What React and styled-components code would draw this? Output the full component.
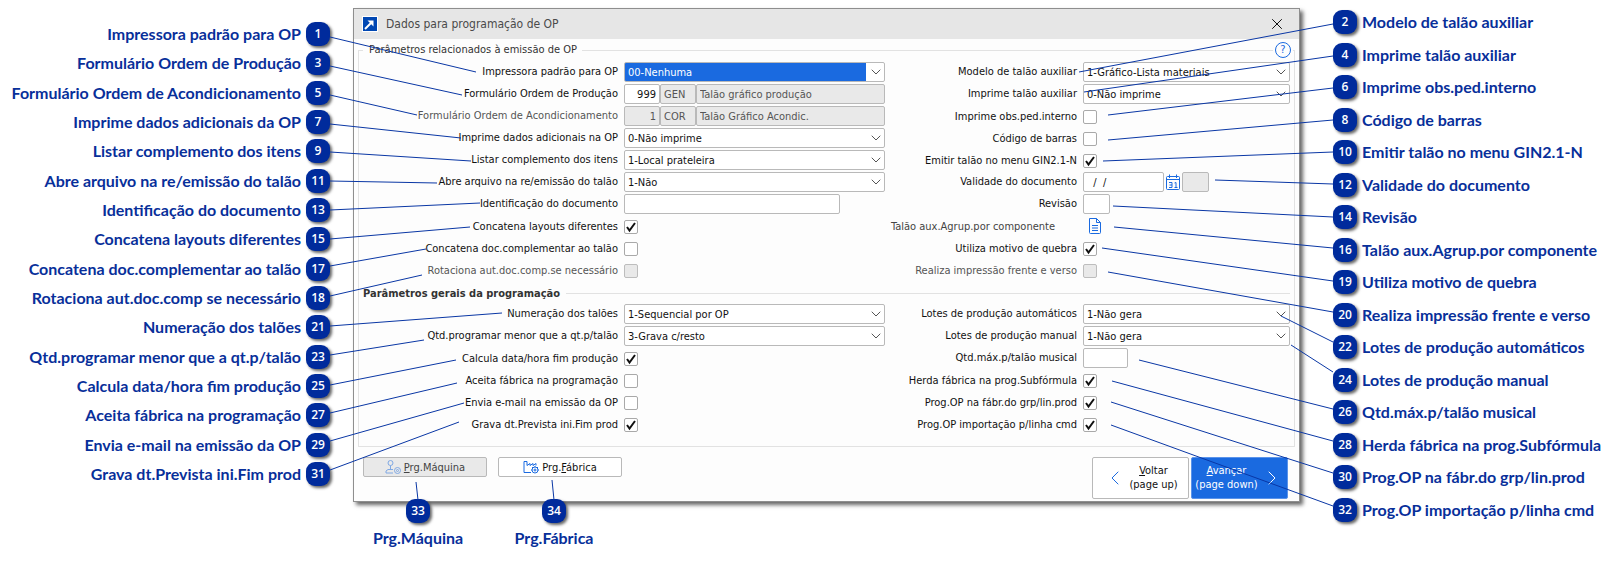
import { useId } from "react";
import styled, { createGlobalStyle } from "styled-components";
import { ChevronDown, ChevronLeft, ChevronRight, X } from "lucide-react";

const leftCallouts = [
    [1, "Impressora padrão para OP"],
    [3, "Formulário Ordem de Produção"],
    [5, "Formulário Ordem de Acondicionamento"],
    [7, "Imprime dados adicionais da OP"],
    [9, "Listar complemento dos itens"],
    [11, "Abre arquivo na re/emissão do talão"],
    [13, "Identificação do documento"],
    [15, "Concatena layouts diferentes"],
    [17, "Concatena doc.complementar ao talão"],
    [18, "Rotaciona aut.doc.comp se necessário"],
    [21, "Numeração dos talões"],
    [23, "Qtd.programar menor que a qt.p/talão"],
    [25, "Calcula data/hora fim produção"],
    [27, "Aceita fábrica na programação"],
    [29, "Envia e-mail na emissão da OP"],
    [31, "Grava dt.Prevista ini.Fim prod"],
]

const rightCallouts = [
    [2, "Modelo de talão auxiliar"],
    [4, "Imprime talão auxiliar"],
    [6, "Imprime obs.ped.interno"],
    [8, "Código de barras"],
    [10, "Emitir talão no menu GIN2.1-N"],
    [12, "Validade do documento"],
    [14, "Revisão"],
    [16, "Talão aux.Agrup.por componente"],
    [19, "Utiliza motivo de quebra"],
    [20, "Realiza impressão frente e verso"],
    [22, "Lotes de produção automáticos"],
    [24, "Lotes de produção manual"],
    [26, "Qtd.máx.p/talão musical"],
    [28, "Herda fábrica na prog.Subfórmula"],
    [30, "Prog.OP na fábr.do grp/lin.prod"],
    [32, "Prog.OP importação p/linha cmd"],
]

const bottomCallouts = [
    [33, "Prg.Máquina"],
    [34, "Prg.Fábrica"],
]

// leader lines, x1 y1 x2 y2: the first set hangs on the left edge, the second on the right edge
const leftLeaders = [
    [330, 37, 476, 72],
    [330, 66, 462, 95],
    [330, 95, 417, 115],
    [330, 124, 461, 138],
    [330, 152, 471, 161],
    [330, 181, 437, 183],
    [330, 210, 480, 203],
    [330, 239, 470, 227],
    [330, 266, 426, 249],
    [330, 296, 422, 275],
    [330, 326, 502, 313],
    [330, 355, 424, 340],
    [330, 385, 456, 360],
    [330, 413, 457, 383],
    [330, 441, 464, 403],
    [330, 470, 459, 422],
    [418, 500, 416, 482],
    [554, 500, 552, 480],
]

const rightLeaders = [
    [278, 24, 24, 72],
    [278, 56, 29, 92],
    [278, 88, 53, 115],
    [278, 120, 53, 140],
    [278, 152, 48, 161],
    [278, 184, 160, 180],
    [278, 217, 58, 206],
    [278, 248, 59, 227],
    [278, 281, 47, 248],
    [278, 312, 53, 272],
    [278, 342, 226, 316],
    [278, 372, 236, 345],
    [278, 409, 84, 360],
    [278, 441, 57, 381],
    [278, 473, 56, 402],
    [278, 506, 56, 425],
]

const Callout = ({number, text}) => (
    <CalloutItem>
        <Badge>{number}</Badge>
        <span>{text}</span>
    </CalloutItem>
)

const Leaders = ({lines, width, side}) => (
    <LeaderSvg $side={side} width={width} height="565" aria-hidden="true">
        {lines.map(([x1, y1, x2, y2]) => (
            <line key={`${x1}-${y1}`} x1={x1} y1={y1} x2={x2} y2={y2} />
        ))}
    </LeaderSvg>
)

const SelectField = ({label, value, selected}) => {
    const id = useId();
    return (
        <>
            <FieldLabel htmlFor={id}>{label}</FieldLabel>
            <SelectWrap>
                <Select id={id} $selected={selected} defaultValue={value}>
                    <option>{value}</option>
                </Select>
                <ChevronDown size={16} strokeWidth={1} absoluteStrokeWidth />
            </SelectWrap>
        </>
    )
}

const CheckField = ({label, checked, disabled}) => {
    const id = useId();
    return (
        <>
            <FieldLabel htmlFor={id} $dim={disabled} $check>{label}</FieldLabel>
            <CheckCell>
                <CheckBox id={id} type="checkbox" defaultChecked={checked} disabled={disabled} />
            </CheckCell>
        </>
    )
}

const TextField = ({label, width}) => {
    const id = useId();
    return (
        <>
            <FieldLabel htmlFor={id}>{label}</FieldLabel>
            <ControlCell>
                <TextInput id={id} type="text" $width={width} />
            </ControlCell>
        </>
    )
}

const FormField = ({label, number, code, name, disabled}) => {
    const id = useId();
    return (
        <>
            <FieldLabel htmlFor={id} $dim={disabled}>{label}</FieldLabel>
            <ControlCell>
                <TextInput id={id} type="text" defaultValue={number} disabled={disabled} $width="36px" $right />
                <TextInput type="text" aria-label={`${label} - código`} defaultValue={code} disabled $width="36px" />
                <TextInput type="text" aria-label={`${label} - descrição`} defaultValue={name} disabled $width="100%" />
            </ControlCell>
        </>
    )
}

const DateField = ({label}) => {
    const id = useId();
    return (
        <>
            <FieldLabel htmlFor={id}>{label}</FieldLabel>
            <ControlCell>
                <TextInput id={id} type="text" defaultValue="  /  /" $width="81px" $date />
                <IconButton type="button" aria-label="Abrir calendário">
                    <svg width="14" height="16" viewBox="0 0 14 16" fill="none" stroke="#1a6ae0">
                        <rect x="0.5" y="2.5" width="13" height="13" rx="1" />
                        <path d="M0.5 5.5h13M3.5 0.5v3.5M10.5 0.5v3.5" />
                        <path d="M3 8.5h3v5h-3M3.5 11h2.5M8.5 9l1.5-0.5v5M8.5 13.5h3" />
                    </svg>
                </IconButton>
                <TextInput type="text" aria-label="Dia da semana" disabled $width="27px" />
            </ControlCell>
        </>
    )
}

const App = () => {
    return (
        <>
            <GlobalStyle />
            <Page>
                <LeftCallouts>
                    {leftCallouts.map(([n, text]) => <Callout key={n} number={n} text={text} />)}
                </LeftCallouts>
                <Middle>
                    <Dialog role="dialog" aria-labelledby="dialogTitle">
                        <TitleBar>
                            <AppIcon width="16" height="16" viewBox="0 0 16 16">
                                <rect x="0.5" y="0.5" width="15" height="15" fill="#0047b3" stroke="#fff" />
                                <path d="M3 13L9.5 6.5" stroke="#fff" strokeWidth="2" />
                                <path d="M5.5 4.5H11.5V10.5Z" fill="#fff" />
                            </AppIcon>
                            <Title id="dialogTitle">Dados para programação de OP</Title>
                            <CloseButton type="button" aria-label="Fechar">
                                <X size={18} strokeWidth={1} absoluteStrokeWidth />
                            </CloseButton>
                        </TitleBar>
                        <Group>
                            <Legend>Parâmetros relacionados à emissão de OP</Legend>
                            <HelpButton type="button" aria-label="Ajuda">?</HelpButton>
                            <Columns>
                                <LeftFields>
                                    <SelectField label="Impressora padrão para OP" value="00-Nenhuma" selected />
                                    <FormField label="Formulário Ordem de Produção" number="999" code="GEN" name="Talão gráfico produção" />
                                    <FormField label="Formulário Ordem de Acondicionamento" number="1" code="COR" name="Talão Gráfico Acondic." disabled />
                                    <SelectField label="Imprime dados adicionais na OP" value="0-Não imprime" />
                                    <SelectField label="Listar complemento dos itens" value="1-Local prateleira" />
                                    <SelectField label="Abre arquivo na re/emissão do talão" value="1-Não" />
                                    <TextField label="Identificação do documento" width="216px" />
                                    <CheckField label="Concatena layouts diferentes" checked />
                                    <CheckField label="Concatena doc.complementar ao talão" />
                                    <CheckField label="Rotaciona aut.doc.comp.se necessário" disabled />
                                </LeftFields>
                                <RightFields>
                                    <SelectField label="Modelo de talão auxiliar" value="1-Gráfico-Lista materiais" />
                                    <SelectField label="Imprime talão auxiliar" value="0-Não imprime" />
                                    <CheckField label="Imprime obs.ped.interno" />
                                    <CheckField label="Código de barras" />
                                    <CheckField label="Emitir talão no menu GIN2.1-N" checked />
                                    <DateField label="Validade do documento" />
                                    <TextField label="Revisão" width="27px" />
                                    <ReportLabel>Talão aux.Agrup.por componente</ReportLabel>
                                    <ControlCell>
                                        <IconButton type="button" aria-label="Talão aux.Agrup.por componente">
                                            <svg width="14" height="16" viewBox="0 0 14 16" fill="none" stroke="#1a6ae0">
                                                <path d="M1.5 0.5h7l4 4v10a1 1 0 0 1-1 1h-9a1 1 0 0 1-1-1z" />
                                                <path d="M8.5 0.5v4h4M4 7.5h6M4 10h6M4 12.5h6" />
                                            </svg>
                                        </IconButton>
                                    </ControlCell>
                                    <CheckField label="Utiliza motivo de quebra" checked />
                                    <CheckField label="Realiza impressão frente e verso" disabled />
                                </RightFields>
                            </Columns>
                            <SectionTitle>Parâmetros gerais da programação</SectionTitle>
                            <Columns>
                                <LeftFields>
                                    <SelectField label="Numeração dos talões" value="1-Sequencial por OP" />
                                    <SelectField label="Qtd.programar menor que a qt.p/talão" value="3-Grava c/resto" />
                                    <CheckField label="Calcula data/hora fim produção" checked />
                                    <CheckField label="Aceita fábrica na programação" />
                                    <CheckField label="Envia e-mail na emissão da OP" />
                                    <CheckField label="Grava dt.Prevista ini.Fim prod" checked />
                                </LeftFields>
                                <RightFields>
                                    <SelectField label="Lotes de produção automáticos" value="1-Não gera" />
                                    <SelectField label="Lotes de produção manual" value="1-Não gera" />
                                    <TextField label="Qtd.máx.p/talão musical" width="45px" />
                                    <CheckField label="Herda fábrica na prog.Subfórmula" checked />
                                    <CheckField label="Prog.OP na fábr.do grp/lin.prod" checked />
                                    <CheckField label="Prog.OP importação p/linha cmd" checked />
                                </RightFields>
                            </Columns>
                        </Group>
                        <Footer>
                            <SmallButton type="button" disabled>
                                <svg width="16" height="14" viewBox="0 0 16 14" fill="none" stroke="currentColor">
                                    <circle cx="5.5" cy="3" r="2.5" />
                                    <path d="M5.5 5.5v4M8 9.5H3l-2 1.5v2h7" />
                                    <circle cx="12.5" cy="10.5" r="3" />
                                    <circle cx="12.5" cy="10.5" r="1" />
                                </svg>
                                <span><u>P</u>rg.Máquina</span>
                            </SmallButton>
                            <SmallButton type="button">
                                <svg width="16" height="14" viewBox="0 0 16 14" fill="none" stroke="currentColor">
                                    <path d="M8 12.5H1V1.5h3v4l3-2v2l3-2v2l3-2v2" />
                                    <circle cx="12" cy="10" r="3" />
                                    <circle cx="12" cy="10" r="1" />
                                    <path d="M8 10h1M12 6v1M15 10h1M9 7l1 1M15 7l-1 1" />
                                </svg>
                                <span>Prg.<u>F</u>ábrica</span>
                            </SmallButton>
                            <Spacer />
                            <PageButton type="button">
                                <ChevronLeft size={24} strokeWidth={1} absoluteStrokeWidth />
                                <span><u>V</u>oltar<br />(page up)</span>
                            </PageButton>
                            <PageButton type="button" $primary>
                                <span><u>A</u>vançar<br />(page down)</span>
                                <ChevronRight size={24} strokeWidth={1} absoluteStrokeWidth />
                            </PageButton>
                        </Footer>
                    </Dialog>
                    <BottomCallouts>
                        {bottomCallouts.map(([n, text]) => <Callout key={n} number={n} text={text} />)}
                    </BottomCallouts>
                </Middle>
                <RightCallouts>
                    {rightCallouts.map(([n, text]) => <Callout key={n} number={n} text={text} />)}
                </RightCallouts>
                <Leaders lines={leftLeaders} width={600} side="left" />
                <Leaders lines={rightLeaders} width={560} side="right" />
            </Page>
        </>
    )
}

const checkMark = `url("data:image/svg+xml,%3Csvg xmlns='http://www.w3.org/2000/svg' width='12' height='12' viewBox='0 0 12 12'%3E%3Cpath d='M2 6L4.5 9.5L10 2' fill='none' stroke='%23111' stroke-width='2'/%3E%3C/svg%3E")`

const GlobalStyle = createGlobalStyle`
    * {
        box-sizing: border-box;
    }
    body {
        margin: 0;
        background: #fff;
    }
    button, input, select {
        font: inherit;
        color: inherit;
        margin: 0;
    }
`

const Page = styled.div`
    position: relative;
    display: grid;
    grid-template-columns: 353px minmax(947px, 1fr) 315px;
    padding-top: 8px;
    font: 11px "DejaVu Sans Condensed", "DejaVu Sans", sans-serif;
    color: #111;
`

const CalloutItem = styled.li`
    display: flex;
    align-items: center;
    gap: 5px;
    line-height: 24px;
    white-space: nowrap;
`

const Badge = styled.span`
    width: 24px;
    height: 24px;
    border-radius: 9px;
    background: #002b9c;
    box-shadow: 2px 2px 3px rgba(0, 0, 0, 0.6);
    color: #fff;
    font: 600 12px/24px "Open Sans", sans-serif;
    text-align: center;
`

const CalloutList = styled.ul`
    display: flex;
    flex-direction: column;
    justify-content: space-between;
    margin: 0;
    list-style: none;
    font: bold 16px Lato, sans-serif;
    color: #082f9a;
`

const LeftCallouts = styled(CalloutList)`
    padding: 14px 23px 64px 0;

    ${CalloutItem} {
        flex-direction: row-reverse;
    }
`

const RightCallouts = styled(CalloutList)`
    padding: 2px 0 28px 33px;
`

const BottomCallouts = styled(CalloutList)`
    flex-direction: row;
    justify-content: flex-start;
    gap: 12px;
    margin-top: -3px;
    padding: 0 0 0 3px;

    ${CalloutItem} {
        width: 124px;
        flex-direction: column;
        gap: 3px;
    }
`

const LeaderSvg = styled.svg`
    position: absolute;
    top: 0;
    ${(p) => p.$side}: 0;
    pointer-events: none;
    stroke: #0a37a5;
    stroke-width: 1;
`

const Middle = styled.div`
    min-width: 0;
`

const Dialog = styled.div`
    border: 1px solid #8e8e8e;
    background: #fdfdfd;
    box-shadow: 3px 3px 4px rgba(0, 0, 0, 0.6);
`

const TitleBar = styled.div`
    display: flex;
    align-items: center;
    height: 30px;
    padding: 0 13px 0 8px;
    background: #e6e6e6;
`

const AppIcon = styled.svg`
    margin-right: 8px;
`

const Title = styled.h1`
    flex: 1;
    margin: 0;
    font-size: 12px;
    font-weight: 400;
    color: #4a4a4a;
`

const CloseButton = styled.button`
    display: flex;
    padding: 0;
    border: 0;
    background: none;
`

const Group = styled.fieldset`
    position: relative;
    min-width: 0;
    margin: 3px 4px 0;
    padding: 3px 4px 11px;
    border: 1px solid #e2e2e2;
`

const Legend = styled.legend`
    padding: 0 5px 0 6px;
    line-height: 16px;
    color: #333;
`

const HelpButton = styled.button`
    position: absolute;
    top: -16px;
    right: 3px;
    width: 16px;
    height: 16px;
    padding: 0;
    border: 1px solid #1a6ae0;
    border-radius: 50%;
    background: #fdfdfd;
    box-shadow: 0 0 0 2px #fdfdfd;
    color: #1a6ae0;
    line-height: 14px;
`

const Columns = styled.div`
    display: flex;
    justify-content: space-between;
`

const Fields = styled.div`
    display: grid;
    grid-auto-rows: 22px;
    column-gap: 6px;
    align-items: center;
`

const LeftFields = styled(Fields)`
    grid-template-columns: 255px 261px;
`

const RightFields = styled(Fields)`
    grid-template-columns: 189px 207px;
`

const FieldLabel = styled.label`
    padding-top: ${(p) => p.$check ? "2px" : 0};
    line-height: 14px;
    text-align: right;
    white-space: nowrap;
    color: ${(p) => p.$dim ? "#555" : "#111"};
`

const ReportLabel = styled.span`
    padding: 2px 22px 0 0;
    line-height: 14px;
    text-align: right;
    white-space: nowrap;
    color: #444;
`

const ControlCell = styled.div`
    display: flex;
    align-items: center;
`

const CheckCell = styled(ControlCell)`
    padding-top: 2px;
`

const SelectWrap = styled.div`
    position: relative;

    svg {
        position: absolute;
        top: 2px;
        right: 1px;
        color: #555;
        pointer-events: none;
    }
`

const Select = styled.select`
    display: block;
    width: 100%;
    height: 20px;
    padding: 0 20px 0 3px;
    appearance: none;
    border: 1px solid #b9b9b9;
    border-radius: 2px;
    background: ${(p) => p.$selected ? "linear-gradient(to right, #1a6ae0 calc(100% - 18px), #fff 0)" : "#fff"};
    color: ${(p) => p.$selected ? "#fff" : "#111"};
`

const TextInput = styled.input`
    width: ${(p) => p.$width};
    height: 20px;
    min-width: 0;
    flex: ${(p) => p.$width === "100%" ? "1" : "none"};
    padding: 0 3px;
    border: 1px solid #b9b9b9;
    border-radius: 2px;
    background: #fff;
    text-align: ${(p) => p.$right ? "right" : "left"};
    white-space: ${(p) => p.$date ? "pre" : "normal"};

    &:disabled {
        background: #e9e9e9;
        color: #555;
    }
`

const CheckBox = styled.input`
    width: 14px;
    height: 14px;
    appearance: none;
    border: 1px solid #a9a9a9;
    border-radius: 2px;
    background: #fff;

    &:checked {
        background: #fff ${checkMark} center no-repeat;
    }
    &:disabled {
        background: #e9e9e9;
        border-color: #bdbdbd;
    }
`

const IconButton = styled.button`
    display: flex;
    justify-content: center;
    width: 18px;
    padding: 0;
    border: 0;
    background: none;

    &:only-child {
        width: 24px;
    }
`

const SectionTitle = styled.h2`
    display: flex;
    align-items: center;
    gap: 6px;
    margin: 0;
    padding-top: 3px;
    font-size: 11px;
    font-weight: 700;
    line-height: 19px;
    color: #333;

    &::after {
        content: "";
        flex: 1;
        border-top: 1px solid #e2e2e2;
    }
`

const Footer = styled.div`
    display: flex;
    align-items: flex-start;
    padding: 10px 11px 2px 9px;
`

const Button = styled.button`
    display: flex;
    align-items: center;
    justify-content: center;
    padding: 0;
    border: 1px solid #b9b9b9;
    border-radius: 2px;
    background: #fff;
`

const SmallButton = styled(Button)`
    width: 124px;
    height: 20px;
    margin-right: 11px;
    gap: 3px;

    svg {
        color: #1a6ae0;
    }
    &:disabled {
        background: #e9e9e9;
        color: #444;
    }
    &:disabled svg {
        opacity: 0.5;
    }
`

const Spacer = styled.div`
    flex: 1;
`

const PageButton = styled(Button)`
    width: 97px;
    height: 42px;
    margin-left: 2px;
    gap: 2px;
    line-height: 14px;
    background: ${(p) => p.$primary ? "#1a6ae0" : "#fff"};
    border-color: ${(p) => p.$primary ? "#5a93ea" : "#b9b9b9"};
    color: ${(p) => p.$primary ? "#fff" : "#111"};

    svg {
        color: ${(p) => p.$primary ? "#fff" : "#1a6ae0"};
    }
`

export default App;
